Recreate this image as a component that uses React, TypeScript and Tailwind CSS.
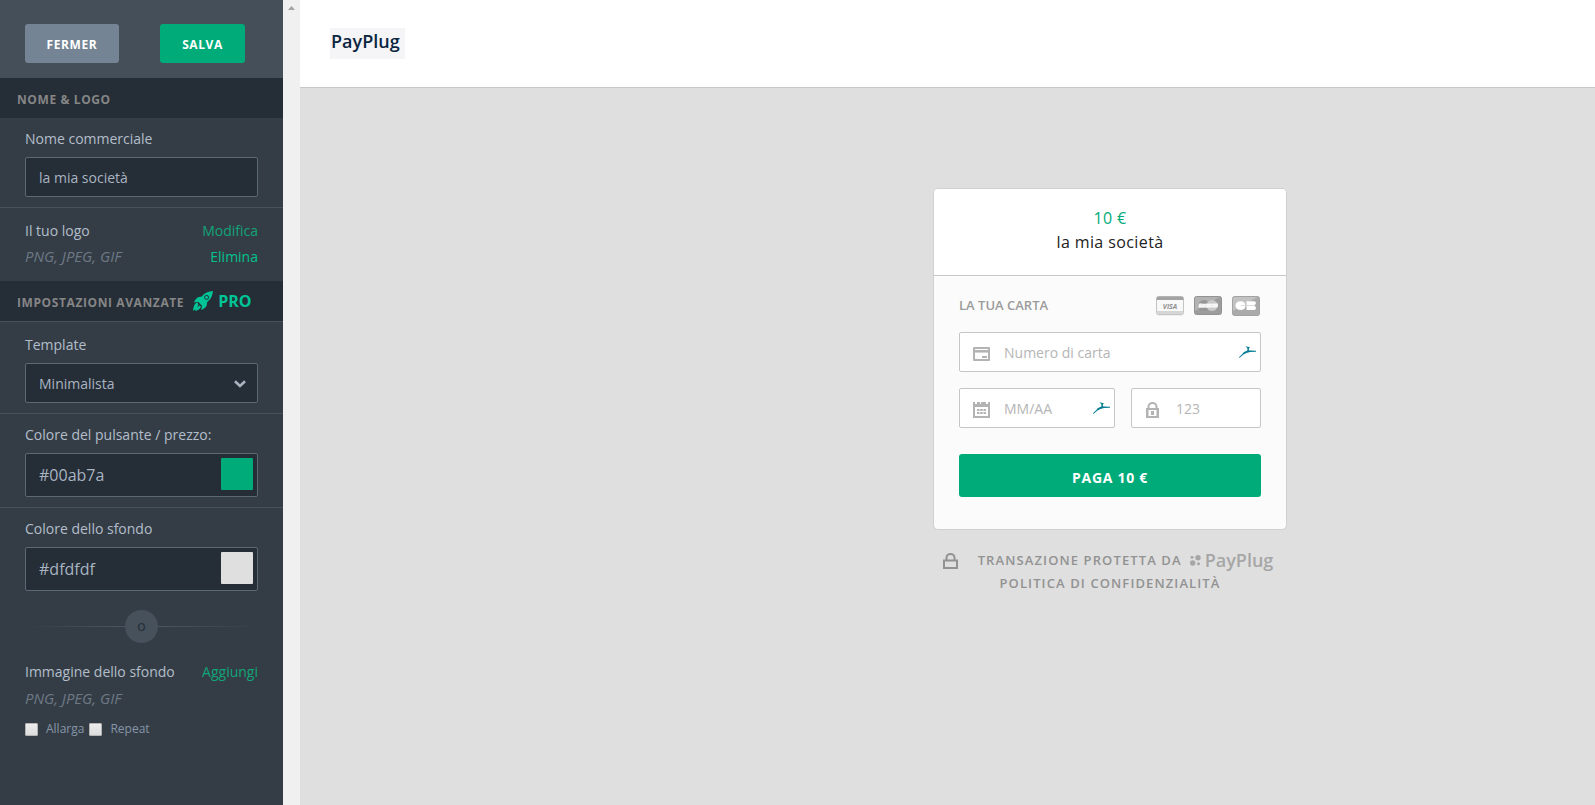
import React from "react";

const inputStyle =
  "w-full h-10 px-[13px] rounded-[2px] border border-[#5b6975] bg-[#252d36] text-sm text-[#a9b4c2] outline-none";

const cardInputStyle =
  "w-full h-10 pl-11 rounded-[2px] border border-[#c6c6c6] bg-white text-sm text-[#555] placeholder:text-[#b5b5b5] outline-none";

function SectionTitle({ children }: { children: React.ReactNode }) {
  return (
    <h2 className="h-10 pl-[17px] flex items-center bg-[#252d36] text-xs font-bold tracking-wider text-[#858686] whitespace-nowrap">
      {children}
    </h2>
  );
}

function ColorField({ id, label, initial }: { id: string; label: string; initial: string }) {
  const [color, setColor] = React.useState(initial);

  return (
    <>
      <label htmlFor={id} className="block h-[31px] leading-[26px]">
        {label}
      </label>
      <div className="flex items-start h-11 pt-1 pl-[13px] pr-1 rounded-[2px] border border-[#5b6975] bg-[#252d36]">
        <input
          id={id}
          type="text"
          value={color}
          onChange={(e) => setColor(e.target.value)}
          className="flex-1 min-w-0 h-[34px] bg-transparent text-base text-[#a9b4c2] outline-none"
        />
        <button
          type="button"
          aria-label={label}
          className="size-8 shrink-0 rounded-[1px]"
          style={{ backgroundColor: color }}
        />
      </div>
    </>
  );
}

function Check({ label }: { label: string }) {
  return (
    <label className="flex items-center gap-2 text-xs text-[#8695a8]">
      <input
        type="checkbox"
        className="appearance-none size-[13px] rounded-[1px] border border-[#b4b4b4] bg-linear-to-b from-[#ededed] to-[#dcdcdc]"
      />
      {label}
    </label>
  );
}

function RocketIcon() {
  return (
    <svg width="20" height="20" viewBox="0 0 20 20" fill="#00c496">
      <path d="M20 0C15.500 .2 11.600 1.700 8.700 5.600L5 6.200C3.200 7.400 1.700 9.500 1 11.500l4.100-.7 3.900 4-.8 4.200c2.300-.8 4.200-2.300 5.400-4.300l.6-3.600C18 8.300 19.600 4.500 20 0z" />
      <path d="M4.300 11.200C1.700 12.500 .4 15 0 20c1-.9 1.700-1.400 2.400-1.500-.1.500-.1 1 .1 1.400 3-.7 5-2 5.400-4.300L6.700 14.300 4 16.500l1.400-3z" />
      <circle cx="13.600" cy="6.400" r="2" fill="#00c496" stroke="#252d36" strokeWidth="1" />
    </svg>
  );
}

function ImpalaIcon() {
  return (
    <svg width="17" height="12" viewBox="0 0 17 12" className="absolute right-[5px] top-3.5" aria-hidden="true">
      <path
        d="M6.300 0 8.300.8 10 .9 11 1.800 10 2.300 9.800 4.300 11.500 4.600 17 4.800V5.800L11 6.100 7.500 7.100 4.500 8.600.4 12 0 11.300 3.600 7.800 4.600 6.300 8.300 4.600 8.400 2.200z"
        fill="#067d95"
      />
    </svg>
  );
}

function VisaIcon() {
  return (
    <svg width="28" height="20" viewBox="0 0 28 20">
      <rect x=".5" y="1" width="27" height="18.500" rx="2" fill="#e4e4e4" />
      <rect x=".5" y=".5" width="27" height="18" rx="2" fill="#f8f8f8" stroke="#c4c4c4" />
      <path d="M.5 4V2.500a2 2 0 0 1 2-2h23a2 2 0 0 1 2 2V4z" fill="#a3a3a3" />
      <path d="M1 15h26v1.500a1.500 1.500 0 0 1-1.500 1.500h-23A1.500 1.500 0 0 1 1 16.500z" fill="#d6d6d6" />
      <text x="14" y="12.500" textAnchor="middle" fontSize="7" fontStyle="italic" fontWeight="700" fill="#909090">
        VISA
      </text>
    </svg>
  );
}

function MastercardIcon() {
  return (
    <svg width="28" height="20" viewBox="0 0 28 20">
      <rect x=".5" y=".5" width="27" height="18" rx="2" fill="#9d9d9d" stroke="#929292" />
      <path d="M1 2.500A1.500 1.500 0 0 1 2.500 1h23L1 15z" fill="#b2b2b2" />
      <circle cx="10" cy="9.500" r="5.500" fill="#969696" />
      <circle cx="18" cy="9.500" r="5.500" fill="#c9c9c9" />
      <path d="M5 7.700l2-.5 1 .5 16-.3-.3 4L5 11.700 4.300 11z" fill="#f6f6f6" />
      <path d="M7.500 9.500l.8-.8M11 10.300l.5-.8M17.500 10.200l.5-.9" stroke="#b8b8b8" strokeWidth=".6" />
    </svg>
  );
}

function CbIcon() {
  return (
    <svg width="28" height="20" viewBox="0 0 28 20">
      <rect x=".5" y=".5" width="27" height="19" rx="2" fill="#aaa" stroke="#a3a3a3" />
      <path d="M1 2.500A1.500 1.500 0 0 1 2.500 1h23L1 15z" fill="#c2c2c2" />
      <path d="M13.500 9H9.500v1h4c-.3 3-2.300 4-5 4-3 0-5-2-5-4.500S5.500 5.200 8.500 5.200c2.800 0 4.700 1.200 5 3.800z" fill="#fff" />
      <path d="M14.500 5.200h7.500a1.900 1.900 0 0 1 0 3.800h-7.500zM14.500 10H22a2 2 0 0 1 0 4h-7.500z" fill="#fff" />
      <path d="M9 9.500h14" stroke="#dcdcdc" />
    </svg>
  );
}

function CardFieldIcon() {
  return (
    <svg width="17" height="14" viewBox="0 0 17 14" className="absolute left-3.5 top-[15px]" aria-hidden="true">
      <path
        fillRule="evenodd"
        d="M1 0h15a1 1 0 0 1 1 1v12a1 1 0 0 1-1 1H1a1 1 0 0 1-1-1V1a1 1 0 0 1 1-1zM2 2v1h13V2zM2 5v7h13V5z"
        fill="#b3b3b3"
      />
      <path d="M2 5h13v1H2z" fill="#d4d4d4" />
      <path d="M9 9h5v2H9z" fill="#b3b3b3" />
    </svg>
  );
}

function CalendarIcon() {
  return (
    <svg width="17" height="16" viewBox="0 0 17 16" className="absolute left-3.5 top-[14px]" aria-hidden="true">
      <path fillRule="evenodd" d="M0 0h2v2h2V0h9v2h2V0h2v16H0zM7 0v2h1V0zM2 5v9h13V5z" fill="#b3b3b3" />
      <path
        d="M4 7h2.500v2H4zM7.200 7h2.600v2H7.200zM10.500 7H13v2h-2.500zM4 10h2.500v2H4zM7.200 10h2.600v2H7.200zM10.500 10H13v2h-2.500z"
        fill="#b3b3b3"
      />
    </svg>
  );
}

function LockFieldIcon() {
  return (
    <svg width="13" height="16" viewBox="0 0 13 16" className="absolute left-[15px] top-[14px]" aria-hidden="true">
      <path d="M2.500 7V4.500a4 3.500 0 0 1 8 0V7" fill="none" stroke="#b3b3b3" strokeWidth="2" />
      <path fillRule="evenodd" d="M0 6h13v10H0zM2.500 8v6h8V8z" fill="#b3b3b3" />
      <path d="M5 9h3v4H5z" fill="#b3b3b3" />
    </svg>
  );
}

export default function App() {
  return (
    <div className="flex min-h-screen overflow-hidden font-['Open_Sans',sans-serif]">
      <aside className="w-[283px] shrink-0 bg-[#343d46] text-sm text-[#b3bdca]">
        <div className="h-[78px] pt-6 pl-[25px] flex items-start gap-[41px] bg-[#454f59]">
          <button className="h-[39px] w-[94px] pt-0.5 rounded-[3px] bg-[#758494] text-xs font-bold tracking-wider text-white">
            FERMER
          </button>
          <button className="h-[39px] w-[85px] pt-0.5 rounded-[3px] bg-[#00ab7a] text-xs font-bold tracking-wider text-white">
            SALVA
          </button>
        </div>

        <SectionTitle>
          <span className="pt-1">NOME &amp; LOGO</span>
        </SectionTitle>
        <div className="pt-2 px-[25px] pb-2.5 border-b border-[#46515c]">
          <label htmlFor="nome" className="block h-[31px] leading-[26px]">
            Nome commerciale
          </label>
          <input id="nome" type="text" defaultValue="la mia società" className={inputStyle} />
        </div>
        <div className="pt-2.5 px-[25px] pb-[11px] leading-[26px]">
          <div className="flex justify-between">
            <span>Il tuo logo</span>
            <a href="#modifica" className="text-[#11a478]">Modifica</a>
          </div>
          <div className="flex justify-between">
            <em className="text-[15px] leading-6 text-[#6d7885]">PNG, JPEG, GIF</em>
            <a href="#elimina" className="text-[#00c48c]">Elimina</a>
          </div>
        </div>

        <SectionTitle>
          <span className="pt-1">IMPOSTAZIONI AVANZATE</span>
          <span className="ml-[9px] flex items-center gap-[5px] text-base tracking-normal text-[#00c496]">
            <RocketIcon />
            PRO
          </span>
        </SectionTitle>
        <div className="pt-2.5 px-[25px] pb-2.5 border-y border-[#46515c]">
          <label htmlFor="template" className="block h-[31px] leading-[26px]">
            Template
          </label>
          <div className="relative">
            <select id="template" className={`${inputStyle} appearance-none pt-0.5`}>
              <option>Minimalista</option>
            </select>
            <svg width="12" height="8" viewBox="0 0 12 8" className="absolute right-3 top-[17px] pointer-events-none">
              <path d="M1 1.200 6 6l5-4.800" fill="none" stroke="#a9b4c2" strokeWidth="2.600" />
            </svg>
          </div>
        </div>
        <div className="pt-2 px-[25px] pb-2.5 border-b border-[#46515c]">
          <ColorField id="pulsante" label="Colore del pulsante / prezzo:" initial="#00ab7a" />
        </div>
        <div className="pt-2 px-[25px]">
          <ColorField id="sfondo" label="Colore dello sfondo" initial="#dfdfdf" />

          <div className="mt-[19px] flex items-center">
            <span className="h-px flex-1 bg-linear-to-r from-transparent to-[#4a5662]" />
            <span className="size-[33px] rounded-full bg-[#46515c] text-center leading-8 text-[#252d36]">o</span>
            <span className="h-px flex-1 bg-linear-to-l from-transparent to-[#4a5662]" />
          </div>

          <div className="mt-4 flex justify-between leading-[26px]">
            <span>Immagine dello sfondo</span>
            <a href="#aggiungi" className="text-[#11a478]">Aggiungi</a>
          </div>
          <em className="block text-[15px] leading-[26px] text-[#6d7885]">PNG, JPEG, GIF</em>
          <div className="mt-2.5 flex gap-[5px]">
            <Check label="Allarga" />
            <Check label="Repeat" />
          </div>
        </div>
      </aside>

      <div className="w-[17px] shrink-0 pt-1.5 bg-[#f0f0f0]">
        <svg width="7" height="4" viewBox="0 0 7 4" className="mx-auto">
          <path d="M0 4 3.500 0 7 4z" fill="#a3a3a3" />
        </svg>
      </div>

      {/* Preview, laid out for a wide page and clipped by the window */}
      <main className="flex-1 min-w-[1620px] bg-[#dfdfdf]">
        <header className="h-[88px] pt-7 pl-[30px] bg-white border-b border-[#c8c8c8]">
          <div className="w-[75px] h-[31px] pl-px bg-[#f5f5f8] text-lg leading-[26px] font-semibold text-[#0b2540]">
            PayPlug
          </div>
        </header>

        <section className="mx-auto mt-[100px] w-[354px]">
          <form className="rounded-[5px] border border-[#d0d0d0] bg-[#fbfbfb] overflow-hidden">
            <div className="h-[87px] pt-[17px] bg-white border-b border-[#c8c8c8] text-center text-base leading-6 tracking-wide text-[#222]">
              <p className="text-[#00ab7a]">10 €</p>
              <p>la mia società</p>
            </div>

            <div className="px-[25px] pb-8">
              <div className="h-14 pr-px flex items-center justify-between">
                <h3 className="pt-1 text-[13px] font-semibold text-[#9b9b9b]">LA TUA CARTA</h3>
                <div className="pt-1 flex gap-2.5">
                  <VisaIcon />
                  <MastercardIcon />
                  <CbIcon />
                </div>
              </div>

              <div className="relative">
                <CardFieldIcon />
                <input aria-label="Numero di carta" placeholder="Numero di carta" className={cardInputStyle} />
                <ImpalaIcon />
              </div>
              <div className="mt-4 flex gap-4">
                <div className="relative w-[156px]">
                  <CalendarIcon />
                  <input aria-label="MM/AA" placeholder="MM/AA" className={cardInputStyle} />
                  <ImpalaIcon />
                </div>
                <div className="relative flex-1">
                  <LockFieldIcon />
                  <input aria-label="CVV" placeholder="123" className={cardInputStyle} />
                </div>
              </div>

              <button
                type="button"
                className="mt-[26px] w-full h-[43px] pt-1 rounded-[3px] bg-[#00ab7a] text-sm font-bold tracking-wider text-white"
              >
                PAGA 10 €
              </button>
            </div>
          </form>

          <footer className="mt-[19px] text-center text-[13px] leading-[23px] font-semibold tracking-[0.085em] text-[#929292]">
            <div className="pr-1 flex items-center justify-center">
              <svg width="15" height="16" viewBox="0 0 15 16" className="mr-5">
                <path d="M3.500 7V4.500a4 3.500 0 0 1 8 0V7M1 7.500h13V15H1z" fill="none" stroke="#929292" strokeWidth="2" />
              </svg>
              TRANSAZIONE PROTETTA DA
              <svg width="11" height="11" viewBox="0 0 11 11" className="ml-2 mr-1" fill="#a6a6a6">
                <circle cx="2" cy="2.300" r="1.500" />
                <circle cx="8" cy="2.700" r="2.700" />
                <circle cx="2.700" cy="8" r="2.700" />
                <circle cx="8.500" cy="8.700" r="1.500" />
              </svg>
              <span className="text-lg leading-[23px] tracking-normal text-[#a6a6a6]">PayPlug</span>
            </div>
            <a href="#privacy">POLITICA DI CONFIDENZIALITÀ</a>
          </footer>
        </section>
      </main>
    </div>
  );
}
